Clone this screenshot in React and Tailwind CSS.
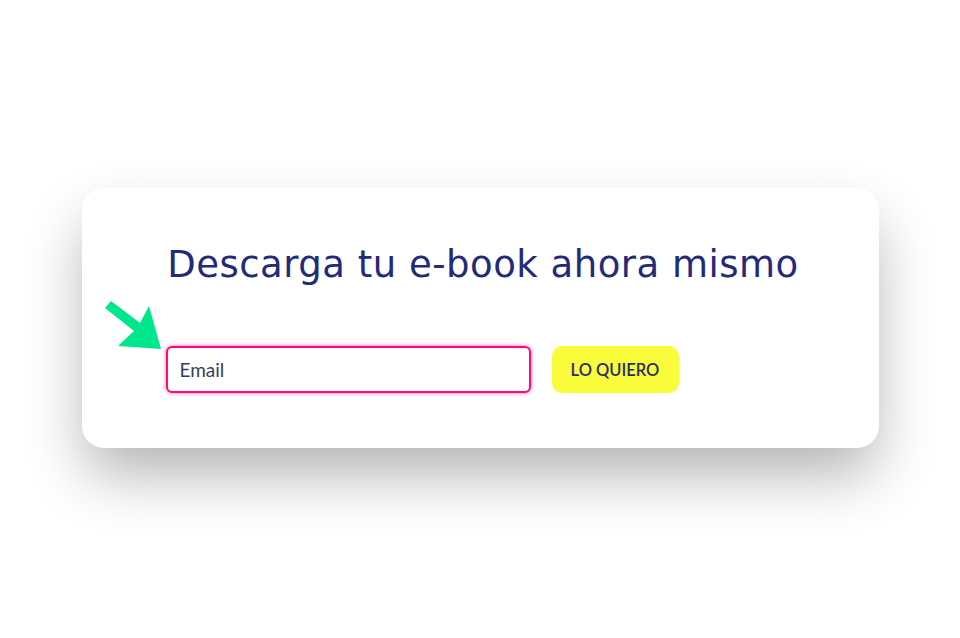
export default function App() {
  return (
    <div className="min-h-[638px] w-full bg-white pt-[188px] font-['Lato',sans-serif]">
      <div className="mx-auto h-[260px] w-[797px] rounded-[22px] bg-white pt-[42px] shadow-[0_30px_60px_-4px_rgba(0,0,0,0.3)]">
        <h1 className="whitespace-nowrap pl-[6px] text-center font-['DejaVu_Sans',sans-serif] text-[37px] font-normal leading-[70px] tracking-[0.5px] text-[#222a7a]">
          Descarga tu e-book ahora mismo
        </h1>
        <div className="relative mx-[84px] mt-[46px] flex items-center gap-[21px]">
          <svg
            className="absolute left-[-63px] top-[-45px]"
            width="62"
            height="48"
            viewBox="0 0 62 48"
          >
            <path d="M2 7 L8 0 L37 22 L46 5 L58 48 L15 45 L31 30 Z" fill="#00e68b" />
          </svg>
          <div className="flex h-[47px] w-[365px] items-center rounded-[6px] border-2 border-[#ff0a78] bg-white px-[12px] pt-[2px] shadow-[0_0_4px_rgba(255,10,120,0.6)]">
            <span className="text-[19px] text-[#363c5e]">Email</span>
          </div>
          <button className="h-[47px] w-[127px] rounded-[10px] bg-[#f8fc3a] pt-[1px] text-[16.5px] font-semibold text-[#2a2d64]">
            LO QUIERO
          </button>
        </div>
      </div>
    </div>
  );
}
